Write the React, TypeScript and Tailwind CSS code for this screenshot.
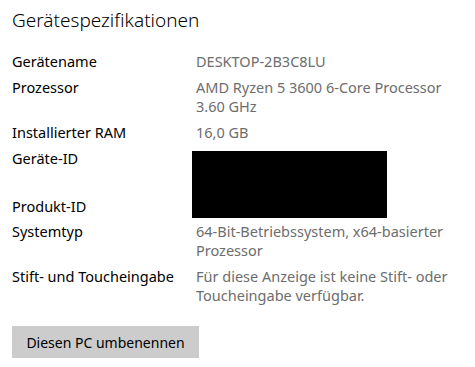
import React from "react";

// Specs list: label on the left, value (gray) on the right
type Spec = { label: string; lines: string[] };

const topSpecs: Spec[] = [
  { label: "Gerätename", lines: ["DESKTOP-2B3C8LU"] },
  { label: "Prozessor", lines: ["AMD Ryzen 5 3600 6-Core Processor", "3.60 GHz"] },
  { label: "Installierter RAM", lines: ["16,0 GB"] },
];

const bottomSpecs: Spec[] = [
  { label: "Systemtyp", lines: ["64-Bit-Betriebssystem, x64-basierter", "Prozessor"] },
  {
    label: "Stift- und Toucheingabe",
    lines: ["Für diese Anzeige ist keine Stift- oder", "Toucheingabe verfügbar."],
  },
];

function Row({ spec }: { spec: Spec }) {
  return (
    <div className="flex">
      <div className="w-[184px] shrink-0 text-black">{spec.label}</div>
      <div className="text-[#6d6d6d]">
        {spec.lines.map((l) => (
          <div key={l} className="whitespace-nowrap">
            {l}
          </div>
        ))}
      </div>
    </div>
  );
}

export default function App() {
  return (
    <div
      className="w-[475px] h-[367px] bg-white px-3 pt-[6px] text-[14.5px] leading-[19px]"
      style={{ fontFamily: '"Noto Sans", "Open Sans", sans-serif' }}
    >
      <h1 className="text-[19px] leading-[28px] font-light text-black">Gerätespezifikationen</h1>

      <div className="mt-[18px] flex flex-col gap-[7px]">
        {topSpecs.map((s) => (
          <Row key={s.label} spec={s} />
        ))}

        {/* IDs are blacked out */}
        <div className="flex h-[66px]">
          <div className="w-[180px] shrink-0 text-black">
            <div className="h-[48px]">Geräte-ID</div>
            <div>Produkt-ID</div>
          </div>
          <div className="mt-[2px] w-[195px] h-[67px] bg-black" />
        </div>

        {bottomSpecs.map((s) => (
          <Row key={s.label} spec={s} />
        ))}
      </div>

      <button className="mt-[21px] h-[32px] w-[187px] bg-[#cccccc] text-black text-[14px]">
        Diesen PC umbenennen
      </button>
    </div>
  );
}
